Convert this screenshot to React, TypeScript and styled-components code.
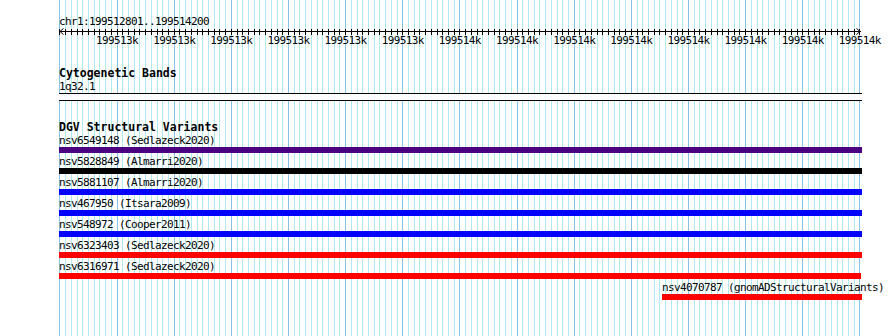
import styled, { createGlobalStyle } from "styled-components";

const GlobalStyle = createGlobalStyle`
  html, body {
    margin: 0;
    padding: 0;
    background: #fff;
  }
  body {
    font-family: "DejaVu Sans Mono", "Liberation Mono", monospace;
    color: #000;
  }
`;

// view: 1400bp across 800px, first gridline at x=59.9
const ORIGIN = 59.9;
const MINOR = 800 / 140;
const LEFT = 59;

const gridXs = Array.from({ length: 141 }, (_, j) => ({
  x: Math.floor(ORIGIN + j * MINOR),
  major: j % 10 === 0,
}));

const tickLabels = [
  ...Array(6).fill("199513k"),
  ...Array(8).fill("199514k"),
];

const variants = [
  { name: "nsv6549148", study: "Sedlazeck2020", color: "#4b0082", x: 0, w: 803 },
  { name: "nsv5828849", study: "Almarri2020", color: "#000000", x: 0, w: 803 },
  { name: "nsv5881107", study: "Almarri2020", color: "#0000ff", x: 0, w: 803 },
  { name: "nsv467950", study: "Itsara2009", color: "#0000ff", x: 0, w: 803 },
  { name: "nsv548972", study: "Cooper2011", color: "#0000ff", x: 0, w: 803 },
  { name: "nsv6323403", study: "Sedlazeck2020", color: "#ff0000", x: 0, w: 803 },
  { name: "nsv6316971", study: "Sedlazeck2020", color: "#ff0000", x: 0, w: 802 },
  { name: "nsv4070787", study: "gnomADStructuralVariants", color: "#ff0000", x: 603, w: 200 },
];

const Page = styled.div`
  position: relative;
  width: 890px;
  height: 336px;
  overflow: hidden;
  background: #fff;
`;

const GridCanvas = styled.svg`
  position: absolute;
  left: 0;
  top: 0;
  z-index: 0;
`;

const Content = styled.div`
  position: relative;
  z-index: 1;
  padding: 15px 0 0 ${LEFT}px;
  display: flex;
  flex-direction: column;
  width: 803px;
`;

const Location = styled.div`
  font-size: 11px;
  letter-spacing: -0.62px;
  line-height: 13px;
  white-space: nowrap;
`;

const RulerLine = styled.svg`
  display: block;
`;

const TickRow = styled.div`
  display: flex;
  margin-left: ${ORIGIN + MINOR * 10 - MINOR * 5 - LEFT}px;
  font-size: 11px;
  letter-spacing: -0.62px;
  line-height: 11px;
  white-space: nowrap;
`;

const TickLabel = styled.div`
  flex: 0 0 ${MINOR * 10}px;
  display: flex;
  justify-content: center;
`;

const TrackTitle = styled.div<{ $gap: number }>`
  margin-top: ${(p) => p.$gap}px;
  font-size: 11.5px;
  font-weight: bold;
  line-height: 13px;
  white-space: nowrap;
`;

const FeatureLabel = styled.div<{ $x: number }>`
  padding-left: ${(p) => p.$x}px;
  font-size: 11px;
  letter-spacing: -0.62px;
  line-height: 13px;
  white-space: nowrap;
`;

const BandBox = styled.div`
  height: 6px;
  border-top: 1px solid #000;
  border-bottom: 1px solid #000;
  background: #fff;
`;

const VariantRow = styled.div`
  display: flex;
  flex-direction: column;
  padding-bottom: 2px;
`;

const VariantBar = styled.div<{ $x: number; $w: number; $color: string }>`
  margin-left: ${(p) => p.$x}px;
  width: ${(p) => p.$w}px;
  height: 6px;
  background: ${(p) => p.$color};
`;

const Grid = () => (
  <GridCanvas width={890} height={336} shapeRendering="crispEdges">
    {gridXs.map((g, i) => (
      <rect
        key={i}
        x={g.x}
        y={0}
        width={1}
        height={336}
        fill={g.major ? "#86c2ea" : "#aee9f0"}
      />
    ))}
  </GridCanvas>
);

const Ruler = () => (
  <RulerLine width={803} height={7} shapeRendering="crispEdges">
    <rect x={1} y={3} width={801} height={1} fill="#000" />
    {gridXs.map((g, i) => (
      <rect key={i} x={g.x - LEFT} y={1} width={1} height={6} fill="#000" />
    ))}
    <polyline
      points="4.5,0.5 1,3.5 4.5,6.5"
      fill="none"
      stroke="#000"
      strokeWidth={1}
      shapeRendering="auto"
    />
    <polyline
      points="797.5,0.5 801,3.5 797.5,6.5"
      fill="none"
      stroke="#000"
      strokeWidth={1}
      shapeRendering="auto"
    />
  </RulerLine>
);

export default function App() {
  return (
    <Page>
      <GlobalStyle />
      <Grid />
      <Content>
        <Location>chr1:199512801..199514200</Location>
        <Ruler />
        <TickRow>
          {tickLabels.map((t, i) => (
            <TickLabel key={i}>{t}</TickLabel>
          ))}
        </TickRow>

        <TrackTitle $gap={21}>Cytogenetic Bands</TrackTitle>
        <FeatureLabel $x={0}>1q32.1</FeatureLabel>
        <BandBox />

        <TrackTitle $gap={20}>DGV Structural Variants</TrackTitle>
        {variants.map((v) => (
          <VariantRow key={v.name}>
            <FeatureLabel $x={v.x}>
              {v.name} ({v.study})
            </FeatureLabel>
            <VariantBar $x={v.x} $w={v.w} $color={v.color} />
          </VariantRow>
        ))}
      </Content>
    </Page>
  );
}
